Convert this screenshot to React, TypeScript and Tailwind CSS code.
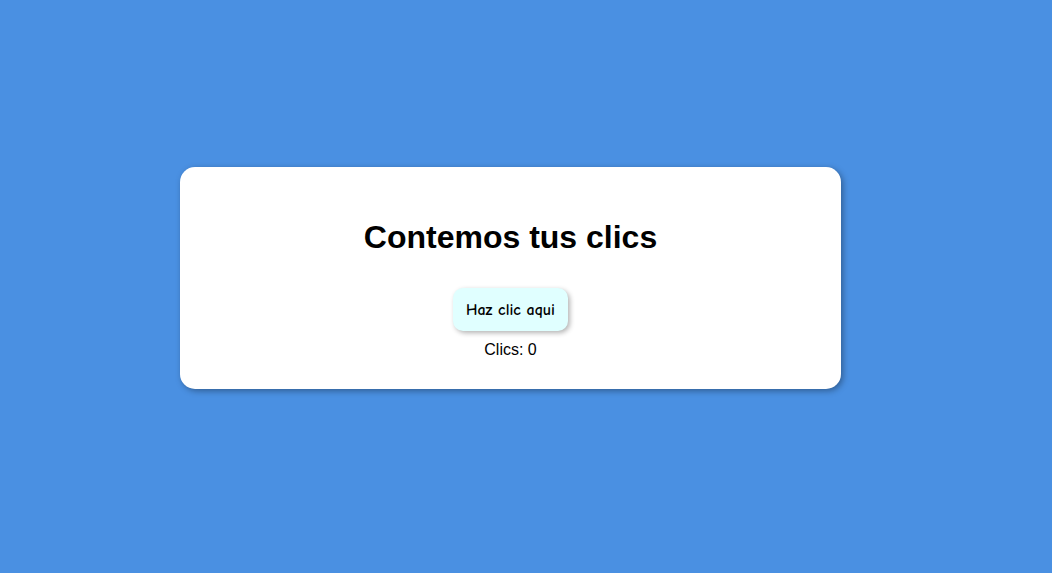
import { useState } from 'react'

export default function App() {
  const [clics, setClics] = useState(0)

  return (
    <div className="min-h-[573px] w-full bg-[#4a90e2] pl-[180px] pt-[167px]" style={{ fontFamily: '"Liberation Sans", Arial, sans-serif' }}>
      <div className="flex w-[661px] flex-col items-center rounded-[15px] bg-white pb-[30px] pt-[52px] shadow-[2px_2px_6px_rgba(0,0,0,0.35)]">
        <h1 className="text-[32px] leading-[37px] font-bold text-black">Contemos tus clics</h1>

        <button
          onClick={() => setClics(clics + 1)}
          className="mt-[32px] flex h-[43px] w-[115px] items-center justify-center rounded-[10px] bg-[#e0ffff] text-[16px] font-bold text-black shadow-[2px_2px_5px_rgba(0,0,0,0.3)]"
          style={{ fontFamily: '"Comic Sans MS", "Comic Neue", "Open Sans", sans-serif' }}
        >
          Haz clic aqui
        </button>

        {/* contador */}
        <p className="mt-[10px] text-[16px] leading-[18px] text-black">Clics: {clics}</p>
      </div>
    </div>
  )
}
